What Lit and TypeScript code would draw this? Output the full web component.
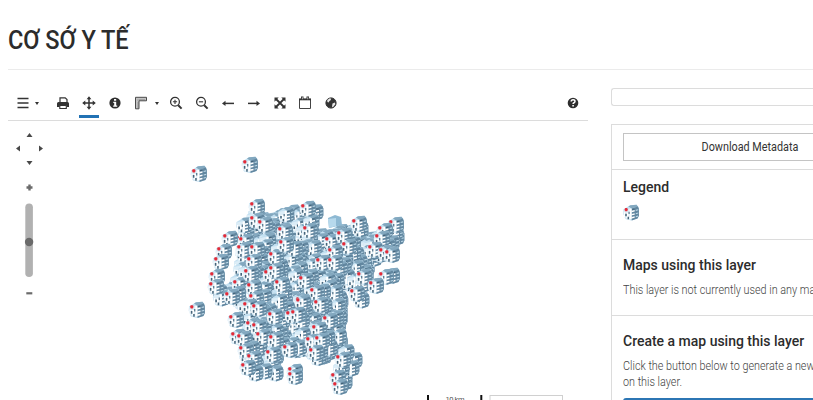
import { LitElement, html, css, svg } from "lit";
import { customElement } from "lit/decorators.js";

/* Position of the red cross of every facility that is drawn on top. */
const FACILITIES: number[][] = [
  [194,171],[245,162],[252,204],[252,218],[260,222],[280,229],[225,236],[241,239],[219,249],[239,247],[252,247],
  [216,259],[249,259],[271,254],[290,246],[281,242],[303,206],[305,228],[327,239],[354,221],[339,233],
  [344,244],[330,250],[318,260],[330,260],[391,222],[380,228],[377,236],[370,247],[381,250],[387,252],[387,273],
  [381,274],[359,274],[371,283],[352,291],[301,278],[312,290],[298,299],[316,302],[212,274],[211,284],[192,307],
  [235,282],[246,271],[233,291],[227,294],[249,285],[251,296],[245,304],[254,306],[266,272],[271,268],[277,282],
  [231,317],[270,314],[248,323],[254,325],[233,334],[239,336],[258,334],[271,337],[288,313],[294,312],[298,300],
  [247,346],[241,348],[249,356],[268,352],[285,347],[243,365],[290,369],[290,374],[293,312],[325,318],[314,327],
  [308,339],[317,338],[311,350],[338,357],[333,375],[335,384],
];

/* Covered facilities, by the centre of the symbol. */
const COVERED: number[][] = [
  [355,360],[345,382],[276,373],[265,371],[256,373],[345,375],[347,352],[316,212],[312,222],[361,229],[397,237],
  [220,292],[222,298],[362,300],[352,368],[342,368],[396,232],[392,243],[388,246],[245,225],
];

const AREA: number[][] = [
  [256,213],[270,221],[292,211],[299,213],[308,228],[318,235],[332,232],[358,229],[364,238],[382,236],[392,240],
  [385,258],[368,260],[368,285],[350,287],[333,280],[341,300],[341,345],[330,352],[318,362],[313,350],
  [296,350],[280,345],[277,368],[252,368],[243,345],[252,325],[246,306],[228,293],[238,283],[243,262],[243,240],
];

function inside(x: number, y: number): boolean {
  let hit = false;
  for (let i = 0, j = AREA.length - 1; i < AREA.length; j = i++) {
    const [ax, ay] = AREA[i];
    const [bx, by] = AREA[j];
    if (ay > y !== by > y && x < ((bx - ax) * (y - ay)) / (by - ay) + ax) hit = !hit;
  }
  return hit;
}

function scatter(): number[][] {
  let seed = 4711;
  const next = () => (seed = (seed * 16807) % 2147483647) / 2147483647;
  const out: number[][] = [];
  for (let row = 208; row < 372; row += 4)
    for (let col = 400; col > 205; col -= 4) {
      const x = col + next() * 5;
      const y = row + next() * 5;
      if (inside(x, y)) out.push([x, y, next()]);
    }
  return out.sort((a, b) => b[0] * 0.4 - b[1] * 0.6 + b[2] * 50 - (a[0] * 0.4 - a[1] * 0.6 + a[2] * 50));
}

const building = (cross: boolean) => svg`
  <path d="M1 5.5 8 1.3 14.5 .8 16.5 3 17 11 15.5 15 9 17 3 15.5.8 10z" fill="#c3e0f1"/>
  <path d="M6 2.600 8 1.3 14.5.8 16 3 9 4.400z" fill="#83a8bf"/>
  <path d="M1 6 8.5 4.5V16.8L3 15.5.8 10z" fill="#dcedf7"/>
  <path d="M9.500 4.6 15.8 2.5 16.9 5V12L15.5 15 9.500 17z" fill="#6287a0"/>
  <path d="M7.300 5h2v10.500h-2zM9.5 7l3-.7v1.500l-3 .6zM9.5 10.200l3-.6v1.500l-3 .6zM9.5 13.300l3-.6v1.500l-3 .7zM4 9h2.200v5.500H4zM1.500 8.500h1.300v5H1.500z" fill="#fff"/>
  <path d="M13.600 6l2.600-.7v1.100l-2.600.7zM13.600 9.500l2.600-.7v1.100l-2.600.7zM13.600 12.600l2.300-.7v1.100l-2.300.7z" fill="#bdd9e8"/>
  <path d="M2.800 10h1.600v2.700H2.800zM5.200 13h1.500v2.700H5.200zM6.200 8h1.100v2.400H6.200zM9.800 5h2.500v1H9.800z" fill="#44647a"/>
  ${cross ? svg`<path d="M2.700 4.200h2.200v3.200H2.700zM2.200 4.800h3.200v2H2.200z" fill="#e22a38"/>` : svg``}`;

const ICONS: Record<string, unknown> = {
  menu: svg`<path d="M2.5 3.5h11M2.5 8h11M2.5 12.5h11" stroke="#333" stroke-width="1.7"/>`,
  print: svg`<path d="M5 7.5V2.8h5.2l1.8 1.8v3" fill="#fff" stroke="#333" stroke-width="1.2"/><path d="M3.5 7h9q1.5 0 1.5 1.5V12h-2.3v-1.5H4.8V12H2V8.500q0-1.500 1.500-1.500z" fill="#333"/><path d="M4.800 10.500h6.500v3h-6.500z" fill="#fff" stroke="#333" stroke-width="1.100"/>`,
  move: svg`<path d="M8 3v10M3 8h10" stroke="#333" stroke-width="1.500"/><path d="M8 1.200 10.400 4.300H5.600zM8 14.800 5.600 11.700h4.800zM1.200 8l3.100-2.400v4.800zM14.800 8l-3.100 2.400V5.600z" fill="#333"/>`,
  info: svg`<circle cx="8" cy="8" r="5.600" fill="#2e2e2e"/><path d="M7 4h2.200v1.700H7zM6.300 6.800h2.900v3.800h1v1.200H6.200v-1.200h1V8h-.9z" fill="#fff"/>`,
  ruler: svg`<path d="M2.500 2.300h11v3.500H6v8H2.500z" fill="#c4c4c4" stroke="#4b4b4b" stroke-width="1"/><path d="M5 5.500v-1M7 5.500V4M9 5.500V4M11 5.500V4M5.800 8H4.400M5.800 10H4.400M5.800 12H4.400" stroke="#666" stroke-width=".7"/>`,
  zoomin: svg`<circle cx="7" cy="6.800" r="4.400" fill="none" stroke="#333" stroke-width="1.300"/><path d="M10.200 10.200 13.600 13.600" stroke="#333" stroke-width="2"/><path d="M4.900 6.800h4.200M7 4.700v4.200" stroke="#333" stroke-width="1.100"/>`,
  zoomout: svg`<circle cx="7" cy="6.800" r="4.400" fill="none" stroke="#333" stroke-width="1.300"/><path d="M10.200 10.200 13.600 13.600" stroke="#333" stroke-width="2"/><path d="M4.900 6.800h4.200" stroke="#333" stroke-width="1.100"/>`,
  left: svg`<path d="M4 8.400h10" stroke="#333" stroke-width="1.500"/><path d="M2 8.400 5.500 5.700v5.400z" fill="#333"/>`,
  right: svg`<path d="M2 8.400h10" stroke="#333" stroke-width="1.500"/><path d="M14 8.400 10.500 5.700v5.400z" fill="#333"/>`,
  expand: svg`<path d="M4 4l8 8M12 4l-8 8" stroke="#333" stroke-width="1.800"/><path d="M2.500 2.500h4.200L2.500 6.700zM13.500 2.500v4.200L9.300 2.500zM2.500 13.500V9.300l4.200 4.200zM13.500 13.500H9.300l4.200-4.200z" fill="#333"/>`,
  calendar: svg`<path d="M2.500 4.500h11v9h-11z" fill="#fff" stroke="#444" stroke-width="1"/><path d="M2 3.400h12v1.900H2z" fill="#333"/><path d="M4 1.500h2.500v3H4zM9.500 1.500H12v3H9.500z" fill="#333"/><path d="M4.900 2.300h.8v2h-.8zM10.400 2.300h.8v2h-.8z" fill="#ddd"/>`,
  globe: svg`<circle cx="8" cy="8" r="5.100" fill="#333" stroke="#333"/><path d="M4.200 5.200 6.200 3.500 8.200 3.600 7.600 5.200 6.500 6 5.600 7.600 4.400 7zM9.500 8.600l2.500-1.200.3 1.800-1.900 2.600-1.400.2.200-1.800z" fill="#e8e8e8"/>`,
  help: svg`<circle cx="8" cy="8" r="5.300" fill="#2e2e2e"/><path d="M6.200 6.600q0-1.900 1.900-1.900t1.900 1.600q0 1-1 1.500-.9.400-.9 1.300" fill="none" stroke="#fff" stroke-width="1.500"/><path d="M7.300 10h1.600v1.500H7.300z" fill="#fff"/>`,
};

@customElement("app-root")
export class AppRoot extends LitElement {
  static styles = css`
    :host { display: block; height: 400px; overflow: hidden; background: #fff; color: #333; font-family: Roboto, sans-serif; }
    header { height: 69px; margin-left: 8px; border-bottom: 1px solid #ebebeb; box-sizing: content-box; }
    h1 { margin: 0; padding-top: 26px; font-size: 25px; line-height: 30px; font-weight: 500; color: #2c2c2c; white-space: nowrap; letter-spacing: -.1px; }
    h1 span { display: inline-block; transform: scaleX(.942); transform-origin: left; }
    .page { display: grid; grid-template-columns: 580px 202px; column-gap: 23px; margin-left: 8px; height: 330px; }
    .tools { display: flex; align-items: stretch; height: 34px; padding-top: 16px; border-bottom: 1px solid #dcdcdc; }
    .tool { display: flex; align-items: center; justify-content: center; width: 25.800px; height: 32px; padding-top: 2px; box-sizing: border-box; }
    .tool.active { position: relative; }
    .tool.active::after { content: ""; position: absolute; left: 3px; right: 2.500px; bottom: 0; height: 3px; background: #2272b4; }
    .tool.menu { width: 42.300px; padding-right: 4px; }
    .tool.ruler { width: 35.800px; }
    .caret { border: 2.200px solid transparent; border-top: 3px solid #333; border-bottom: 0; margin-left: 4px; }
    .ruler .caret { margin-left: 6px; }
    .spacer { flex: 1; }
    .tool.help { margin-right: 2px; }
    .icon { width: 16px; height: 16px; flex: none; }
    .map { display: block; width: 580px; height: 279px; }
    aside { padding-top: 18px; }
    .box { height: 16px; border: 1px solid #dcdcdc; border-right: 0; border-radius: 3px 0 0 3px; }
    .panel { margin-top: 18px; border: 1px solid #dcdcdc; border-width: 1px 0 0 1px; height: 290px; }
    section { padding: 0 0 0 11px; border-bottom: 1px solid #dcdcdc; box-sizing: border-box; white-space: nowrap; overflow: hidden; }
    .download { height: 45px; padding-top: 8px; }
    .button { height: 26px; width: 251px; border: 1px solid #c4c4c4; font-size: 12.500px; line-height: 26px; text-align: center; }
    .button span, h2 span, p span { display: inline-block; transform: scaleX(.865); transform-origin: left; }
    .button span { transform-origin: center; }
    h2 span { transform: scaleX(.932); }
    .legend { height: 70px; padding-top: 8px; }
    .used { height: 76px; padding-top: 16px; }
    .create { height: 100px; padding-top: 16px; }
    h2 { margin: 0; font-size: 15px; line-height: 19px; font-weight: 500; color: #2c2c2c; }
    p { margin: 7px 0 0; font-size: 12.500px; line-height: 16px; font-weight: 300; color: #444; }
    .symbol { display: block; width: 17px; height: 17px; margin-top: 7px; }
    .primary { height: 30px; margin-top: 8px; background: #2c76b4; border-radius: 3px 0 0 0; }
  `;

  private tool(name: string, extra = "", caret = false) {
    return html`<div class="tool ${extra}"><svg class="icon" viewBox="0 0 16 16">${ICONS[name]}</svg>${caret ? html`<i class="caret"></i>` : ""}</div>`;
  }

  render() {
    return html`
      <header><h1><span>CƠ SỚ Y TẾ</span></h1></header>
      <div class="page">
        <main>
          <div class="tools">
            ${this.tool("menu", "menu", true)}${this.tool("print")}${this.tool("move", "active")}${this.tool("info")}
            ${this.tool("ruler", "ruler", true)}
            ${["zoomin", "zoomout", "left", "right", "expand", "calendar", "globe"].map((n) => this.tool(n))}
            <div class="spacer"></div>
            ${this.tool("help", "help")}
          </div>
          <svg class="map" viewBox="8 121 580 279">
            <defs><g id="plain">${building(false)}</g><g id="marked">${building(true)}</g></defs>
            ${scatter().map(([x, y, r]) => svg`<use href=${r > 0.94 ? "#marked" : "#plain"} x=${(x - 9.5).toFixed(1)} y=${(y - 8.5).toFixed(1)}></use>`)}
            <path d="M328 218l7-3 6 2 1 8-13 3z" fill="#8eb9d3"/><path d="M328 219l8-1v8l-7 2z" fill="#b7d9ec"/>
            ${COVERED.map(([x, y]) => svg`<use href="#plain" x=${x - 9.5} y=${y - 8.5}></use>`)}
            ${FACILITIES.map(([x, y]) => svg`<use href="#marked" x=${x - 4} y=${y - 6}></use>`)}
            <path d="M29.500 133l3 4h-6zM29.500 165l3-4h-6zM16 148.500l4-3v6zM43 148.500l-4-3v6z" fill="#484848"/>
            <path d="M29.500 184.500v6M26.500 187.500h6" stroke="#6b6b6b" stroke-width="2.400"/>
            <rect x="25.300" y="203.500" width="7.600" height="73.500" rx="3.800" fill="#b1b1b1"/>
            <circle cx="29.100" cy="242" r="4.200" fill="#6a6a6a"/>
            <path d="M26.300 293.300h6" stroke="#6b6b6b" stroke-width="2.200"/>
            <path d="M428 395v5M481.300 395v5" stroke="#111" stroke-width="2"/>
            <text x="445.500" y="402" font-size="7.500" fill="#555" textLength="19">10 km</text>
            <rect x="490" y="395.500" width="72.500" height="10" fill="#fff" stroke="#d0d0d0"/>
          </svg>
        </main>
        <aside>
          <div class="box"></div>
          <div class="panel">
            <section class="download"><div class="button"><span>Download Metadata</span></div></section>
            <section class="legend"><h2><span>Legend</span></h2><svg class="symbol" viewBox="0.500 0 17.500 17.500">${building(true)}</svg></section>
            <section class="used"><h2><span>Maps using this layer</span></h2><p><span>This layer is not currently used in any maps.</span></p></section>
            <section class="create"><h2><span>Create a map using this layer</span></h2><p><span>Click the button below to generate a new map based<br>on this layer.</span></p><div class="primary"></div></section>
          </div>
        </aside>
      </div>`;
  }
}
